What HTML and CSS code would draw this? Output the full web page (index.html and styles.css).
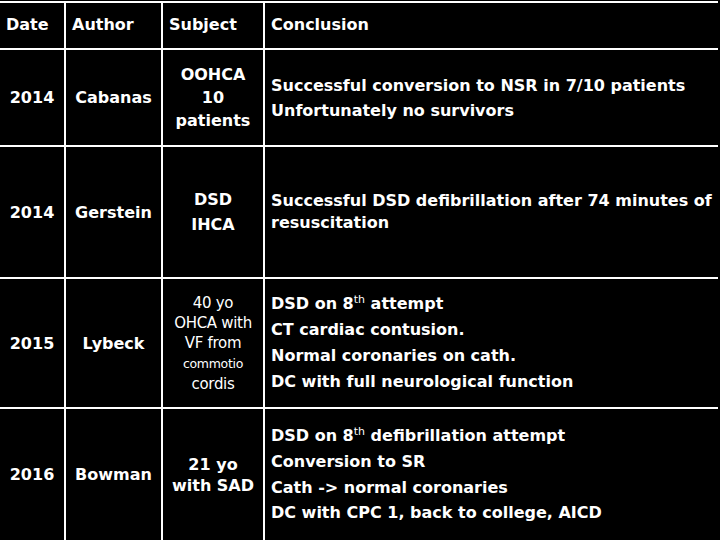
FILE: index.html
```html
<!DOCTYPE html>
<html>
<head>
<meta charset="utf-8">
<link rel="stylesheet" href="styles.css">
</head>
<body>
<div class="table">
  <div class="cell head"><div>Date</div></div>
  <div class="cell head"><div>Author</div></div>
  <div class="cell head"><div>Subject</div></div>
  <div class="cell head"><div>Conclusion</div></div>

  <div class="cell mid"><div>2014</div></div>
  <div class="cell mid"><div>Cabanas</div></div>
  <div class="cell mid subj s1"><div>OOHCA<br>10<br>patients</div></div>
  <div class="cell concl c1"><div>Successful conversion to NSR in 7/10 patients<br>Unfortunately no survivors</div></div>

  <div class="cell mid"><div>2014</div></div>
  <div class="cell mid"><div>Gerstein</div></div>
  <div class="cell mid subj s2"><div>DSD<br>IHCA</div></div>
  <div class="cell concl c2"><div>Successful DSD defibrillation after 74 minutes of<br>resuscitation</div></div>

  <div class="cell mid"><div>2015</div></div>
  <div class="cell mid"><div>Lybeck</div></div>
  <div class="cell mid subj s3"><div>40 yo<br>OHCA with<br>VF from<br><span class="small">commotio</span><br>cordis</div></div>
  <div class="cell concl c3"><div>DSD on 8<sup>th</sup> attempt<br>CT cardiac contusion.<br>Normal coronaries on cath.<br>DC with full neurological function</div></div>

  <div class="cell mid"><div>2016</div></div>
  <div class="cell mid"><div>Bowman</div></div>
  <div class="cell mid subj s4"><div>21 yo<br>with SAD</div></div>
  <div class="cell concl c4"><div>DSD on 8<sup>th</sup> defibrillation attempt<br>Conversion to SR<br>Cath -&gt; normal coronaries<br>DC with CPC 1, back to college, AICD</div></div>
</div>
</body>
</html>
```
FILE: styles.css
```css
html, body {
  margin: 0;
  padding: 0;
  background: #000;
}
body {
  width: 720px;
  height: 540px;
  overflow: hidden;
  font-family: "DejaVu Sans", Verdana, sans-serif;
  font-weight: bold;
  font-size: 16px;
  color: #fff;
}
.table {
  display: grid;
  grid-template-columns: 64px 95px 100px 453px;
  grid-template-rows: 45px 95px 130px 128px 131px;
  gap: 2px;
  width: 718px;
  margin-top: 1px;
  padding-top: 2px;
  background: #fff;
}
.cell {
  background: #000;
  display: flex;
  align-items: center;
}
.head {
  padding-left: 6px;
  padding-bottom: 2px;
}
.mid {
  justify-content: center;
  text-align: center;
}
.concl {
  padding-left: 6px;
  white-space: nowrap;
}
.s1 { line-height: 23px; }
.s2 { line-height: 25px; }
.s3 {
  font-weight: normal;
  font-size: 15px;
  line-height: 20px;
  letter-spacing: -0.3px;
}
.s3 .small { font-size: 12.5px; }
.s4 { line-height: 21px; }
.c1 { line-height: 25px; }
.c2 { line-height: 22px; }
.c3 { line-height: 26px; }
.c4 { line-height: 25.7px; }
sup {
  font-size: 11px;
  line-height: 0;
  vertical-align: 6px;
  font-weight: normal;
}
```
